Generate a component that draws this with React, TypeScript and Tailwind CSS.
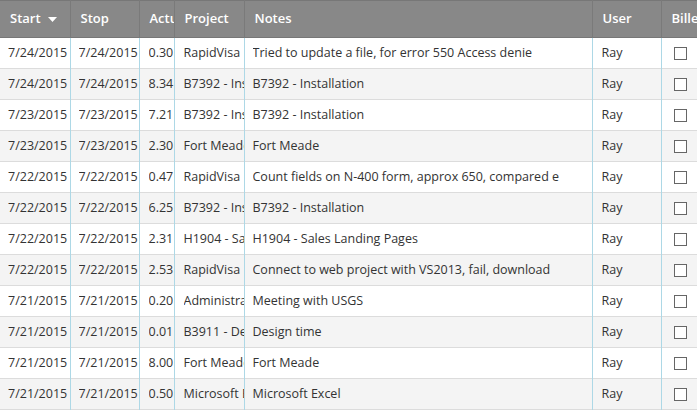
const rows = [
  ["7/24/2015", "7/24/2015", "0.30", "RapidVisa", "Tried to update a file, for error 550 Access denie"],
  ["7/24/2015", "7/24/2015", "8.34", "B7392 - Installation", "B7392 - Installation"],
  ["7/23/2015", "7/23/2015", "7.21", "B7392 - Installation", "B7392 - Installation"],
  ["7/23/2015", "7/23/2015", "2.30", "Fort Meade", "Fort Meade"],
  ["7/22/2015", "7/22/2015", "0.47", "RapidVisa", "Count fields on N-400 form, approx 650, compared e"],
  ["7/22/2015", "7/22/2015", "6.25", "B7392 - Installation", "B7392 - Installation"],
  ["7/22/2015", "7/22/2015", "2.31", "H1904 - Sales Landing Pages", "H1904 - Sales Landing Pages"],
  ["7/22/2015", "7/22/2015", "2.53", "RapidVisa", "Connect to web project with VS2013, fail, download"],
  ["7/21/2015", "7/21/2015", "0.20", "Administration", "Meeting with USGS"],
  ["7/21/2015", "7/21/2015", "0.01", "B3911 - Design", "Design time"],
  ["7/21/2015", "7/21/2015", "8.00", "Fort Meade", "Fort Meade"],
  ["7/21/2015", "7/21/2015", "0.50", "Microsoft Excel", "Microsoft Excel"],
];

const cols = [
  { label: "Start", w: "w-[70px]" },
  { label: "Stop", w: "w-[69px]" },
  { label: "Actual", w: "w-[35px]" },
  { label: "Project", w: "w-[70px]" },
  { label: "Notes", w: "w-[348px]" },
  { label: "User", w: "w-[69px]" },
  { label: "Billed", w: "w-[36px]" },
];

// left padding per body column
const pad = ["pl-[8px]", "pl-[8px]", "pl-[9px]", "pl-[9px]", "pl-[8px]"];

export default function App() {
  return (
    <div className="w-[697px] h-[410px] overflow-hidden bg-white font-['Open_Sans',sans-serif] text-[12.5px] text-[#333]">
      <table className="table-fixed border-collapse w-[697px]">
        <colgroup>
          {cols.map((c) => (
            <col key={c.label} className={c.w} />
          ))}
        </colgroup>
        <thead>
          <tr className="h-[37px] bg-[#888888] text-white border-t border-b border-[#777] text-[13px]">
            {cols.map((c, i) => (
              <th
                key={c.label}
                className={`text-left font-semibold whitespace-nowrap overflow-hidden p-0 ${
                  i > 0 ? "border-l border-[#7a7a7a]" : ""
                }`}
              >
                <div className="flex items-center overflow-hidden pl-[10px]">
                  {c.label}
                  {i === 0 && (
                    <svg width="9" height="5" viewBox="0 0 9 5" className="ml-[7px] shrink-0">
                      <path d="M0 0h9L4.5 5z" fill="white" />
                    </svg>
                  )}
                </div>
              </th>
            ))}
          </tr>
        </thead>
        <tbody>
          {rows.map((r, ri) => (
            <tr
              key={ri}
              className={`h-[31px] border-b border-[#dcdcdc] ${ri % 2 ? "bg-[#f4f4f4]" : "bg-white"}`}
            >
              {r.map((v, ci) => (
                <td
                  key={ci}
                  className={`p-0 pt-[1px] whitespace-nowrap overflow-hidden border-r border-[#add8e6] ${pad[ci]}`}
                >
                  <div className="overflow-hidden">{v}</div>
                </td>
              ))}
              <td className="p-0 pt-[1px] pl-[9px] border-r border-[#add8e6]">Ray</td>
              <td className="p-0 pl-[12px] border-r border-[#add8e6]">
                <div className="w-[13px] h-[13px] border border-[#666] bg-white" />
              </td>
            </tr>
          ))}
        </tbody>
      </table>
    </div>
  );
}
